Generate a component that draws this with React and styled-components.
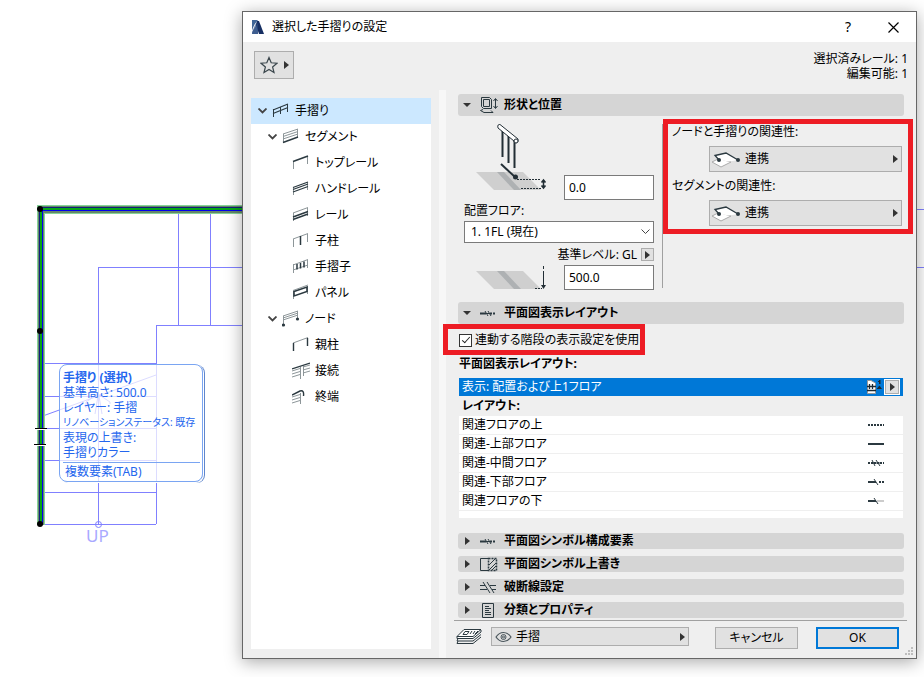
import styled, { createGlobalStyle } from "styled-components"

const GlobalStyle = createGlobalStyle`
  *, *::before, *::after {
    box-sizing: border-box;
  }

  body {
    margin: 0;
    background: #ffffff;
    color: #000000;
    font-family: "Noto Sans", "Noto Sans CJK JP", sans-serif;
    font-size: 12px;
    line-height: 16px;
    font-feature-settings: "palt";
  }

  button, input, select {
    margin: 0;
    border-radius: 0;
    color: inherit;
    font: inherit;
    font-feature-settings: inherit;
  }

  svg {
    display: block;
    flex: none;
  }
`

const Page = styled.main`
  position: relative;
  min-height: 100vh;
  padding: 11px 7px 18px 242px;
  overflow: hidden;
`

/* floor plan behind the dialog */

const Plan = styled.svg`
  position: absolute;
  top: 0;
  left: 0;
  width: 100%;
  height: 560px;
`

const InfoTag = styled.aside`
  position: absolute;
  top: 364px;
  left: 59px;
  width: 144px;
  height: 118px;
  padding: 5px 2px 0 3px;
  border: 1px solid #7aa5f2;
  border-radius: 8px;
  background: rgba(255, 255, 255, 0.72);
  box-shadow: 1px 1px 0 #ffffff, 2px 1px 0 #5f86cc;
  color: #2466ee;
  line-height: 15px;
  white-space: nowrap;
`

const TagTitle = styled.strong`
  display: block;
`

const TagLine = styled.div`
  font-size: ${({ $small }) => ($small ? 10 : 12)}px;
`

const TagFooter = styled.div`
  margin-top: 2px;
  padding: 1px 2px 0;
  border-top: 1px solid #7aa5f2;
`

/* dialog */

const Dialog = styled.section`
  position: relative;
  display: flex;
  flex-direction: column;
  border: 1px solid #666666;
  background: #efefef;
  box-shadow: 0 3px 16px rgba(0, 0, 0, 0.34);
`

const TitleBar = styled.header`
  display: flex;
  align-items: center;
  height: 30px;
  padding: 0 14px 0 8px;
  gap: 7px;
  background: #ffffff;
`

const Title = styled.h1`
  flex: 1;
  margin: 0;
  font-size: 12px;
  font-weight: 400;
`

const WindowButton = styled.button`
  display: grid;
  place-items: center;
  width: 18px;
  height: 18px;
  margin-left: 20px;
  padding: 0;
  border: 0;
  background: transparent;
  font-size: 14px;
`

const TopRow = styled.div`
  display: flex;
  justify-content: space-between;
  height: 48px;
  padding: 9px 8px 0 11px;
`

const FavoriteButton = styled.button`
  display: flex;
  align-items: center;
  justify-content: center;
  gap: 6px;
  width: 40px;
  height: 28px;
  padding: 0;
  border: 1px solid #adadad;
  background: #e1e1e1;
`

const Status = styled.div`
  line-height: 15px;
  text-align: right;
`

const Body = styled.div`
  display: grid;
  grid-template-columns: 188px 15px minmax(0, 1fr);
`

const TreePane = styled.nav`
  margin: 8px 0 9px 8px;
  background: #ffffff;
`

const TreeRow = styled.div`
  display: flex;
  align-items: center;
  gap: 5px;
  height: 26px;
  padding-left: ${({ $level }) => 7 + $level * 10}px;
  background: ${({ $selected }) => ($selected ? "#cce8ff" : "transparent")};
`

const Twisty = styled.span`
  width: 9px;
`

const Splitter = styled.div`
  margin-left: 8px;
  background: #f7f7f7;
`

const Content = styled.div`
  display: flex;
  flex-direction: column;
  padding-top: 4px;
`

const Sections = styled.div`
  padding: 0 12px;
`

const SectionHeader = styled.button`
  display: flex;
  align-items: center;
  width: 100%;
  height: ${({ $open }) => ($open ? 22 : 16)}px;
  padding: 0 4px;
  border: 0;
  border-radius: 3px;
  background: #d5d5d5;
  font-weight: 700;
  text-align: left;
`

const HeaderArrow = styled.span`
  display: grid;
  place-items: center;
  width: 10px;
  margin-right: 8px;
`

const HeaderIcon = styled.span`
  width: 18px;
  margin-right: 6px;
`

const ShapePanel = styled.div`
  display: flex;
  padding: 8px 2px 12px 6px;
`

const ShapeFields = styled.div`
  width: 190px;
  margin-right: 8px;
`

const FieldRow = styled.div`
  display: flex;
  align-items: flex-end;
  justify-content: space-between;
  height: ${({ $tall }) => ($tall ? 76 : 25)}px;
  padding-left: 12px;
`

const TextInput = styled.input`
  width: 90px;
  height: 25px;
  padding: 0 4px;
  border: 1px solid #7a7a7a;
  background: #ffffff;
`

const StoreyLabel = styled.label`
  display: block;
  line-height: 21px;
`

const SelectBox = styled.div`
  position: relative;

  svg {
    position: absolute;
    top: 8px;
    right: 4px;
    pointer-events: none;
  }
`

const Select = styled.select`
  display: block;
  width: 100%;
  height: 22px;
  padding: 0 20px 0 6px;
  border: 1px solid #7a7a7a;
  background: #ffffff;
  appearance: none;
`

const LevelRow = styled.div`
  display: flex;
  align-items: center;
  justify-content: flex-end;
  gap: 4px;
  height: 13px;
  margin: 5px 0 4px;
`

const StepButton = styled.button`
  display: grid;
  place-items: center;
  width: ${({ $size }) => $size}px;
  height: ${({ $size }) => $size}px;
  padding: 0;
  border: 1px solid #adadad;
  outline: ${({ $ring }) => ($ring ? "1px solid #ffffff" : "none")};
  background: #e1e1e1;
`

const Relations = styled.div`
  position: relative;
  flex: 1;
  height: 164px;
  padding-left: 9px;
  border-left: 1px solid #a0a0a0;

  &::after {
    content: "";
    position: absolute;
    top: -5px;
    right: -11px;
    left: 0;
    height: 115px;
    border: 5px solid #ed1c24;
    pointer-events: none;
  }
`

const Relation = styled.div`
  margin-bottom: 6px;
`

const RelationLabel = styled.div`
  margin-bottom: 6px;
`

const PopupButton = styled.button`
  display: flex;
  align-items: center;
  gap: 4px;
  padding: 0 3px;
  border: 1px solid #adadad;
  background: #e1e1e1;
  text-align: left;

  span {
    flex: 1;
  }
`

const RelationButton = styled(PopupButton)`
  width: calc(100% - 37px);
  height: 26px;
  margin-left: 37px;
  padding-left: 1px;
`

const LayerButton = styled(PopupButton)`
  flex: 1;
  height: 19px;
  margin: 0 26px 0 9px;
`

const CheckRow = styled.div`
  position: relative;
  display: flex;
  align-items: center;
  width: 202px;
  height: 32px;
  margin-left: -15px;
  padding-left: 16px;
  white-space: nowrap;

  &::after {
    content: "";
    position: absolute;
    top: 0;
    right: 0;
    left: 0;
    height: 31px;
    border: 5px solid #ed1c24;
    pointer-events: none;
  }
`

const Checkbox = styled.input`
  position: relative;
  flex: none;
  width: 13px;
  height: 13px;
  margin-right: 3px;
  border: 1px solid #333333;
  background: #ffffff;
  appearance: none;

  &:checked::after {
    content: "";
    position: absolute;
    top: 0;
    left: 4px;
    width: 4px;
    height: 8px;
    border: solid #222222;
    border-width: 0 1px 1px 0;
    transform: rotate(42deg);
  }
`

const GroupTitle = styled.h2`
  margin: 0 0 6px;
  padding-left: 1px;
  font-size: 12px;
  font-weight: 700;
`

const LayoutList = styled.ul`
  margin: 0 1px 15px;
  padding: 0;
  list-style: none;
`

const LayoutRow = styled.li`
  display: flex;
  align-items: center;
  justify-content: space-between;
  height: 18px;
  margin-bottom: 1px;
  padding: 0 19px 0 3px;
  background: #ffffff;
`

const ShownRow = styled(LayoutRow)`
  margin: 0;
  padding-right: 4px;
  background: #0078d7;
  color: #ffffff;
`

const ShownTools = styled.span`
  display: flex;
  align-items: center;
  gap: 3px;
  color: #000000;
`

const ListTitle = styled.li`
  padding-left: 3px;
  font-weight: 700;
  line-height: 20px;
`

const ListEnd = styled.li`
  height: 7px;
  background: #ffffff;
`

const ClosedSections = styled.div`
  display: grid;
  gap: 7px;
  padding-bottom: 2px;
`

const Footer = styled.footer`
  display: flex;
  align-items: flex-start;
  margin: 0 9px 0 8px;
  padding: 6px 8px 9px 2px;
  border-top: 1px solid #a0a0a0;
`

const DialogButton = styled.button`
  width: 83px;
  height: 22px;
  margin-left: ${({ $primary }) => ($primary ? 18 : 0)}px;
  padding: 0;
  border: ${({ $primary }) => ($primary ? "2px solid #0078d7" : "1px solid #adadad")};
  background: #e1e1e1;
  line-height: 16px;
`

const Grip = styled.svg`
  position: absolute;
  right: 2px;
  bottom: 2px;
`

/* icons */

const ink = "#2b3940"
const soft = "#8d9699"

const RightArrow = () => (
  <svg width="5" height="8" viewBox="0 0 5 8">
    <path d="M0 0L5 4L0 8Z" fill="#333" />
  </svg>
)

const DownArrow = () => (
  <svg width="8" height="4" viewBox="0 0 8 4">
    <path d="M0 0H8L4 4Z" fill="#333" />
  </svg>
)

const Chevron = () => (
  <svg width="9" height="6" viewBox="0 0 9 6">
    <path d="M0.5 0.5L4.5 4.5L8.5 0.5" fill="none" stroke="#444" strokeWidth="1.8" />
  </svg>
)

const treeShapes = {
  railing: (
    <g stroke={ink} fill="none">
      <path d="M1 8L16 2M1 11.500L16 5.500" strokeWidth="1.2" />
      <path d="M1.500 7V15M8.500 5V12M15.500 2V10" />
    </g>
  ),
  segment: (
    <g stroke={soft} fill="none">
      <path d="M1.500 6V14M15.500 1V9M1 6L16 1M1 8.500L16 3.500M1 11L16 6" />
      <path d="M1 14.500L16 9" stroke={ink} strokeWidth="1.400" />
    </g>
  ),
  topRail: (
    <g stroke={soft} fill="none">
      <path d="M1.500 7V15M15.500 2V10" />
      <path d="M1 7.500L16 2" stroke={ink} strokeWidth="1.500" />
    </g>
  ),
  handrail: (
    <g stroke={soft} fill="none">
      <path d="M1.500 7V15M15.500 2V10" />
      <path d="M1 7.500L16 2M1 9.500L16 4M1 12L16 6.500" stroke={ink} strokeWidth="1.300" />
    </g>
  ),
  rail: (
    <g stroke={soft} fill="none">
      <path d="M1.500 7V15M15.500 2V10M1 7L16 1.500" />
      <path d="M1 11L16 5.500M1 13.500L16 8" stroke={ink} strokeWidth="1.400" />
    </g>
  ),
  post: (
    <g stroke={soft} fill="none">
      <path d="M1.500 7V15M15.500 2V10M1 7L16 1.500" />
      <path d="M8.500 4V13" stroke={ink} strokeWidth="1.500" />
    </g>
  ),
  baluster: (
    <g stroke={soft} fill="none">
      <path d="M1.500 6V15M15.500 2V10M1 7L16 1.500M1 12L16 7" />
      <path d="M5 6V11.500M8.500 5V10.500M12 3.500V9.500" stroke={ink} strokeWidth="1.500" />
    </g>
  ),
  panel: (
    <g stroke={soft} fill="none">
      <path d="M1.500 7V15M15.500 2V10M1 6.500L16 1" />
      <path d="M2 7.500L15 3V7.500L2 12Z" stroke={ink} strokeWidth="1.600" />
    </g>
  ),
  node: (
    <g stroke={soft} fill="none">
      <path d="M1.500 6V14M15.500 1V9M1 6L16 1M1 8L16 3M1 10L16 5" />
      <circle cx="1.500" cy="15" r="1.600" fill={ink} stroke="none" />
      <circle cx="15.500" cy="9" r="1.600" fill={ink} stroke="none" />
    </g>
  ),
  newel: (
    <g stroke={soft} fill="none">
      <path d="M1 7L16 1.500" />
      <path d="M1.500 7V15M15.500 2V10" stroke={ink} strokeWidth="1.400" />
    </g>
  ),
  joint: (
    <g stroke={soft} fill="none">
      <path d="M0 9L8 6.500M0 12L8 9.500M0 15L8 12.500M11 5L18 3M11 8L18 6M11 11L18 9" />
      <path d="M8.500 5V17M11.500 4V14" />
      <path d="M0 7L18 1" stroke={ink} strokeWidth="1.300" />
    </g>
  ),
  end: (
    <g stroke={soft} fill="none">
      <path d="M0 9L8 6.500M0 12L8 9.500M0 15L8 12.500M8.500 5V16" />
      <path d="M0 7L8 3C11 2 12 4 11.500 8" stroke={ink} strokeWidth="1.400" />
    </g>
  ),
}

const TreeIcon = ({ name }) => (
  <svg width="18" height="18" viewBox="0 0 18 18">
    {treeShapes[name]}
  </svg>
)

const sectionShapes = {
  shape: (
    <g stroke={ink} fill="none">
      <path d="M1.500 0.500H9.500L11.500 2.500V11.500H3.500L1.500 9.500ZM3.500 2.500H9.500V9.500H3.500Z" />
      <path d="M3 12.500L0.500 13.500L4 15.500H13L11 13.500" />
      <path d="M15.500 2V11M13.500 4L15.500 1.500L17.500 4M13.500 9L15.500 11.500L17.500 9" />
    </g>
  ),
  plan: (
    <g stroke={ink} fill="none">
      <path d="M0 8.500H6" strokeWidth="2" />
      <path d="M5 6L8 11M8 6L11 11M6 8.500H9" />
      <path d="M10 8.500H16" strokeWidth="2" strokeDasharray="2 1" />
    </g>
  ),
  override: (
    <g stroke={ink} fill="none">
      <path d="M8 2.500H0.500V14.500H8" />
      <path d="M8.500 2.500H16.500V14.500H8.500Z" strokeDasharray="2 1" strokeWidth="1.500" />
      <path d="M9 9L15 3M9 14L16 7M12 14L16 10" />
    </g>
  ),
  breakLine: (
    <g stroke={ink} fill="none">
      <path d="M0 6.500H5M10 6.500H16M0 10.500H7M12 10.500H16M3 3L10 14M7 3L14 14" />
    </g>
  ),
  property: (
    <g stroke={ink} fill="none">
      <path d="M2.500 1.500H13.500V15.500H2.500Z" />
      <path d="M5 4.500H9M5 6.500H11M5 8.500H9M5 10.500H11M5 12.500H11" />
    </g>
  ),
}

const SectionIcon = ({ name }) => (
  <svg width="18" height="17" viewBox="0 0 18 17">
    {sectionShapes[name]}
  </svg>
)

const lineShapes = {
  dotted: <path d="M0 5H16" strokeWidth="2" strokeDasharray="2 1" />,
  solid: <path d="M0 5H16" strokeWidth="2" />,
  middle: (
    <>
      <path d="M0 5H16" strokeWidth="2" strokeDasharray="2 1" />
      <path d="M4 2L7 8M8 2L12 8M4 5H12" />
    </>
  ),
  lower: (
    <>
      <path d="M0 5H8" strokeWidth="2" />
      <path d="M6 2L10 8" />
      <path d="M11 5H16" strokeWidth="2" strokeDasharray="2 1" />
    </>
  ),
  below: (
    <>
      <path d="M9 5H16" strokeWidth="2" stroke="#cccccc" />
      <path d="M0 5H8" strokeWidth="2" />
      <path d="M6 2L10 8" />
    </>
  ),
}

const LineIcon = ({ name }) => (
  <svg width="16" height="10" viewBox="0 0 16 10" stroke={ink} fill="none">
    {lineShapes[name]}
  </svg>
)

const StoreyIcon = () => (
  <svg width="15" height="16" viewBox="0 0 15 16">
    <path d="M0.500 1.500H4L8.500 4V14.500H0.500Z" fill="#fff" stroke="#999" />
    <path d="M0 7.500H9M0 11.500H9M2.500 5V10M5.500 5V10" stroke="#1d2a33" strokeWidth="1.300" />
    <path d="M9.500 10L12.500 6.500L15 10ZM12 1H13.500V5H12ZM11 2H12V3H11Z" fill="#1d2a33" />
  </svg>
)

const LinkIcon = () => (
  <svg width="30" height="20" viewBox="0 0 30 20">
    <path d="M1 13L8 9.500L20 13L10 18Z" fill="#fff" stroke="#aaa" />
    <path d="M8 11L4 6.500L15 4L27 11L18 12.500Z" fill="#fff" />
    <path d="M8 11L4 6.500L15 4L27 11" fill="none" stroke={ink} strokeWidth="1.300" />
    <circle cx="8" cy="11" r="2" fill={ink} />
    <circle cx="27" cy="11" r="2" fill={ink} />
  </svg>
)

const HeightFigure = () => (
  <svg width="74" height="76" viewBox="0 0 74 76">
    <path d="M0 48H47L65 66H18Z" fill="#cfcfcf" />
    <path d="M21 48H28L45 66H38Z" fill="#aeb1b3" />
    <g stroke="#222e35" fill="none">
      <path d="M26.500 6V33M32.500 10V39M38.500 15V44" strokeWidth="2" />
      <path d="M24 0.500L42 15C43 19 39 20 38 17L22 4C21 1 23 0 24 0.500Z" fill="#fff" />
      <circle cx="40" cy="17" r="2" fill="#fff" />
      <path d="M25 40L39 53" strokeWidth="2" />
      <path d="M41 55.500H65M45 64.500H65" strokeDasharray="2 1" />
      <path d="M67.500 57V63M65.500 58.500L67.500 56L69.500 58.500M65.500 61.500L67.500 64L69.500 61.500" strokeWidth="1.500" />
    </g>
    <circle cx="39.500" cy="53" r="2.500" fill="#222e35" />
  </svg>
)

const LevelFigure = () => (
  <svg width="74" height="25" viewBox="0 0 74 25">
    <path d="M0 6H47L65 24H18Z" fill="#cfcfcf" />
    <path d="M21 6H28L45 24H38Z" fill="#aeb1b3" />
    <path d="M59 23.500H66" stroke="#222e35" strokeDasharray="2 1" fill="none" />
    <path d="M67.500 1V4M67.500 6V22" stroke="#222e35" fill="none" />
    <path d="M65 20H70L67.500 24Z" fill="#222e35" />
  </svg>
)

const LogoIcon = () => (
  <svg width="14" height="15" viewBox="0 0 14 15">
    <path d="M1 0V11C2 7 4 3 7 0Z" fill="#3f6597" />
    <path d="M1 14C2 9 4 4 7 1V14Z" fill="#7188ae" />
    <path d="M6 1H8L13 14H8L5 5Z" fill="#172f63" />
    <path d="M1 12L7 3V14H1Z" fill="#294b82" opacity="0.7" />
  </svg>
)

const StarIcon = () => (
  <svg width="18" height="18" viewBox="0 0 18 18">
    <path
      d="M9 1.500L11.200 6.800L17 7.200L12.600 11L14 16.500L9 13.500L4 16.500L5.400 11L1 7.200L6.800 6.800Z"
      fill="none"
      stroke="#3a464c"
      strokeWidth="1.200"
    />
  </svg>
)

const LayersIcon = () => (
  <svg width="26" height="18" viewBox="0 0 26 18" fill="none" stroke={ink}>
    <path d="M1 16.500H17L25 10M1 16.500L2 14M1 14H17L25 7.500M1 14L2 11.500" />
    <path d="M1 9.500V11.500H17L25 5V3" fill="#fff" />
    <path d="M8 2.500H25L17 9.500H1Z" fill="#fff" />
    <path d="M9 4.500H13L11 7.500H7ZM16 4L14 7M19 4L17 7M22 4L19 7" />
  </svg>
)

const EyeIcon = () => (
  <svg width="17" height="12" viewBox="0 0 17 12" fill="none" stroke="#4a565c">
    <path d="M1 6C5 0 12 0 16 6C12 12 5 12 1 6Z" strokeWidth="1.200" />
    <circle cx="8.500" cy="6" r="2.500" />
    <circle cx="8.500" cy="6" r="1" />
  </svg>
)

const tree = [
  { name: "手摺り", icon: "railing", level: 0, open: true },
  { name: "セグメント", icon: "segment", level: 1, open: true },
  { name: "トップレール", icon: "topRail", level: 2 },
  { name: "ハンドレール", icon: "handrail", level: 2 },
  { name: "レール", icon: "rail", level: 2 },
  { name: "子柱", icon: "post", level: 2 },
  { name: "手摺子", icon: "baluster", level: 2 },
  { name: "パネル", icon: "panel", level: 2 },
  { name: "ノード", icon: "node", level: 1, open: true },
  { name: "親柱", icon: "newel", level: 2 },
  { name: "接続", icon: "joint", level: 2 },
  { name: "終端", icon: "end", level: 2 },
]

const layouts = [
  { name: "関連フロアの上", icon: "dotted" },
  { name: "関連-上部フロア", icon: "solid" },
  { name: "関連-中間フロア", icon: "middle" },
  { name: "関連-下部フロア", icon: "lower" },
  { name: "関連フロアの下", icon: "below" },
]

const closedSections = [
  { name: "平面図シンボル構成要素", icon: "plan" },
  { name: "平面図シンボル上書き", icon: "override" },
  { name: "破断線設定", icon: "breakLine" },
  { name: "分類とプロパティ", icon: "property" },
]

const relations = ["ノードと手摺りの関連性:", "セグメントの関連性:"]

const Header = ({ open, icon, children }) => (
  <SectionHeader type="button" $open={open} aria-expanded={Boolean(open)}>
    <HeaderArrow>{open ? <DownArrow /> : <RightArrow />}</HeaderArrow>
    <HeaderIcon>
      <SectionIcon name={icon} />
    </HeaderIcon>
    {children}
  </SectionHeader>
)

const FloorPlan = () => (
  <Plan fill="none" shapeRendering="crispEdges">
    <g stroke="#8080ff">
      <path d="M178.500 213V325M210.500 213V325M98.500 524V267M156.500 524V325" />
      <path d="M44 363.500H156M44 396.500H156M44 428.500H156M44 460.500H156M44 492.500H156M44 524.500H156" />
      <line x1="98" y1="267.500" x2="100%" y2="267.500" />
      <line x1="156" y1="325.500" x2="260" y2="325.500" />
      <line x1="260" y1="209.500" x2="100%" y2="209.500" />
      <path d="M40 417L156 375M98 394L86 402V408M98 394L110 402V404M98 396L95 414M99 396L102 414" shapeRendering="auto" />
      <circle cx="98.500" cy="524.500" r="3" shapeRendering="auto" />
    </g>
    <path d="M37 205H260V214H45V525H37Z" fill="#86d498" />
    <path d="M38 206H260V213H44V525H38Z" fill="#67866a" />
    <path d="M39 207H260V211H43V525H39Z" fill="#0000ee" />
    <path d="M39 207H260V208H40V525H39Z" fill="#10207c" />
    <path d="M40 208H260V210H42V525H40Z" fill="#06a516" />
    <path d="M35 429.500H47M34 445.500H46" stroke="#ffffff" />
    <path d="M35 428.500H47M34 444.500H46" stroke="#000000" />
    <g fill="#000000" shapeRendering="auto">
      <circle cx="40" cy="209" r="3" />
      <circle cx="40" cy="331" r="3" />
      <circle cx="40" cy="524" r="3" />
    </g>
    <text x="86" y="542" fill="#a9a9ff" fontSize="17">
      UP
    </text>
  </Plan>
)

const App = () => {
  return (
    <Page>
      <GlobalStyle />
      <FloorPlan />
      <InfoTag>
        <TagTitle>手摺り (選択)</TagTitle>
        <TagLine>基準高さ: 500.0</TagLine>
        <TagLine>レイヤー: 手摺</TagLine>
        <TagLine $small>リノベーションステータス: 既存</TagLine>
        <TagLine>表現の上書き:</TagLine>
        <TagLine>手摺りカラー</TagLine>
        <TagFooter>複数要素(TAB)</TagFooter>
      </InfoTag>

      <Dialog role="dialog" aria-labelledby="dialog-title">
        <TitleBar>
          <LogoIcon />
          <Title id="dialog-title">選択した手摺りの設定</Title>
          <WindowButton type="button">?</WindowButton>
          <WindowButton type="button" aria-label="閉じる">
            <svg width="11" height="11" viewBox="0 0 11 11">
              <path d="M0.500 0.500L10.500 10.500M10.500 0.500L0.500 10.500" stroke="#000" strokeWidth="1.200" />
            </svg>
          </WindowButton>
        </TitleBar>

        <TopRow>
          <FavoriteButton type="button" aria-label="お気に入り">
            <StarIcon />
            <RightArrow />
          </FavoriteButton>
          <Status>
            <div>選択済みレール: 1</div>
            <div>編集可能: 1</div>
          </Status>
        </TopRow>

        <Body>
          <TreePane>
            {tree.map((item, i) => (
              <TreeRow key={item.name} $level={item.level} $selected={i === 0}>
                <Twisty>{item.open && <Chevron />}</Twisty>
                <TreeIcon name={item.icon} />
                {item.name}
              </TreeRow>
            ))}
          </TreePane>
          <Splitter />
          <Content>
            <Sections>
              <Header open icon="shape">形状と位置</Header>
              <ShapePanel>
                <ShapeFields>
                  <FieldRow $tall>
                    <HeightFigure />
                    <TextInput defaultValue="0.0" aria-label="高さ" />
                  </FieldRow>
                  <StoreyLabel htmlFor="storey">配置フロア:</StoreyLabel>
                  <SelectBox>
                    <Select id="storey">
                      <option>1. 1FL (現在)</option>
                    </Select>
                    <svg width="9" height="6" viewBox="0 0 9 6">
                      <path d="M0.500 0.500L4.500 4.500L8.500 0.500" fill="none" stroke="#444" />
                    </svg>
                  </SelectBox>
                  <LevelRow>
                    <label htmlFor="level">基準レベル: GL</label>
                    <StepButton type="button" $size={13} aria-label="基準レベルの選択">
                      <RightArrow />
                    </StepButton>
                  </LevelRow>
                  <FieldRow>
                    <LevelFigure />
                    <TextInput id="level" defaultValue="500.0" />
                  </FieldRow>
                </ShapeFields>
                <Relations>
                  {relations.map((label) => (
                    <Relation key={label}>
                      <RelationLabel>{label}</RelationLabel>
                      <RelationButton type="button">
                        <LinkIcon />
                        <span>連携</span>
                        <RightArrow />
                      </RelationButton>
                    </Relation>
                  ))}
                </Relations>
              </ShapePanel>

              <Header open icon="plan">平面図表示レイアウト</Header>
              <CheckRow>
                <Checkbox type="checkbox" id="linked" defaultChecked />
                <label htmlFor="linked">連動する階段の表示設定を使用</label>
              </CheckRow>
              <GroupTitle>平面図表示レイアウト:</GroupTitle>
              <LayoutList>
                <ShownRow>
                  表示: 配置および上1フロア
                  <ShownTools>
                    <StoreyIcon />
                    <StepButton type="button" $size={14} $ring aria-label="表示フロアの選択">
                      <RightArrow />
                    </StepButton>
                  </ShownTools>
                </ShownRow>
                <ListTitle>レイアウト:</ListTitle>
                {layouts.map((layout) => (
                  <LayoutRow key={layout.name}>
                    {layout.name}
                    <LineIcon name={layout.icon} />
                  </LayoutRow>
                ))}
                <ListEnd />
              </LayoutList>

              <ClosedSections>
                {closedSections.map((section) => (
                  <Header key={section.name} icon={section.icon}>
                    {section.name}
                  </Header>
                ))}
              </ClosedSections>
            </Sections>
            <Footer>
              <LayersIcon />
              <LayerButton type="button">
                <EyeIcon />
                <span>手摺</span>
                <RightArrow />
              </LayerButton>
              <DialogButton type="button">キャンセル</DialogButton>
              <DialogButton type="button" $primary>OK</DialogButton>
            </Footer>
          </Content>
        </Body>
        <Grip width="9" height="9" viewBox="0 0 9 9">
          <path d="M6 0H8V2H6ZM3 3H5V5H3ZM6 3H8V5H6ZM0 6H2V8H0ZM3 6H5V8H3ZM6 6H8V8H6Z" fill="#bdbdbd" />
        </Grip>
      </Dialog>
    </Page>
  )
}

export default App
